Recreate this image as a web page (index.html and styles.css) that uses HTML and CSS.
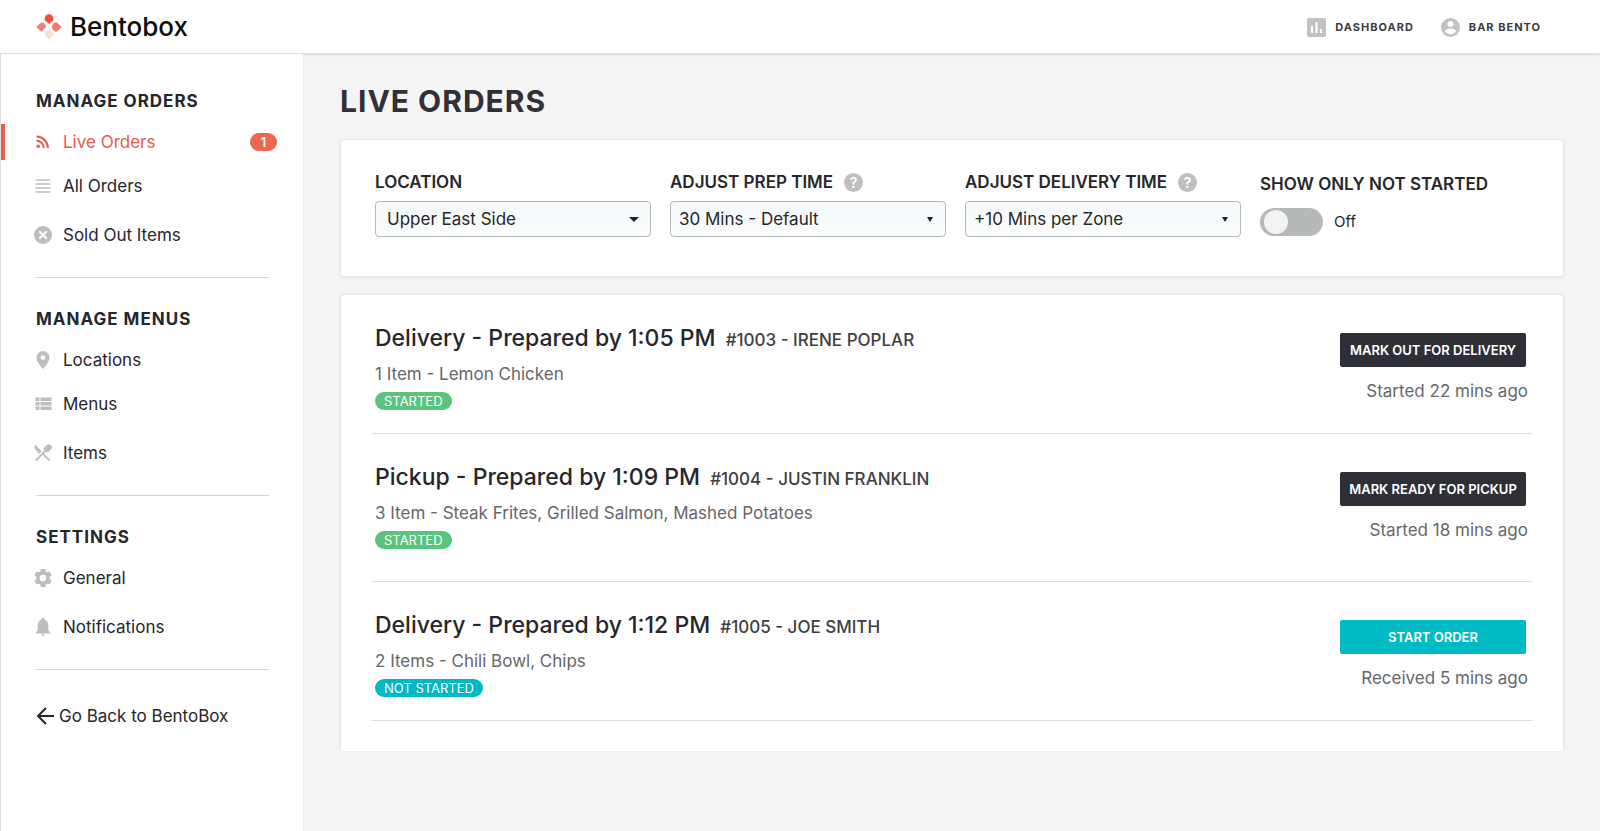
FILE: index.html
```html
<!doctype html>
<html lang="en">
    <head>
        <meta charset="utf-8">
        <title>Live Orders - Bentobox</title>
        <meta name="viewport" content="width=device-width, initial-scale=1">
        <link rel="stylesheet" href="styles.css">
    </head>
    <body>
        <header class="topbar">
            <a class="logo" href="#">
                <svg class="logo-mark" viewBox="0 0 26 26">
                    <path fill="#fb4b37" d="M13 10L8.900 6.200C8 3 10.200.3 13 .3s5 2.700 4.100 5.900z"/>
                    <path fill="#f08079" d="M10 13l-4.500 4.800L.3 13l5.200-4.800C8.300 8.700 10 10.600 10 13z"/>
                    <path fill="#f5796c" d="M16 13c0-2.400 1.600-4.300 4.500-4.800l5.200 4.800-5.200 4.800C17.700 17.300 16 15.400 16 13z"/>
                    <path fill="#fddcd6" d="M8.400 20.500c.5-2.600 2.200-4.200 4.600-4.200s4.100 1.600 4.600 4.200L13 25.500z"/>
                </svg>
                <span>Bentobox</span>
            </a>
            <nav class="topnav">
                <a href="#">
                    <svg class="top-icon" viewBox="0 0 19 19">
                        <rect width="19" height="19" rx="2" fill="#c2c2c2"/>
                        <path fill="#fff" d="M4 8h2v7H4zM8.500 4h2v11h-2zM13 11h2v4h-2z"/>
                    </svg>
                    <span>DASHBOARD</span>
                </a>
                <a href="#">
                    <svg class="top-icon" viewBox="0 0 19 19">
                        <circle cx="9.500" cy="9.500" r="9.500" fill="#c2c2c2"/>
                        <circle cx="9.500" cy="6" r="3" fill="#fff"/>
                        <path fill="#fff" d="M3.800 13.200c1-2 3.400-2.700 5.700-2.700s4.700.7 5.700 2.700c-1.200 1.800-3.300 3-5.700 3s-4.500-1.200-5.700-3z"/>
                    </svg>
                    <span>BAR BENTO</span>
                </a>
            </nav>
        </header>

        <div class="layout">
            <aside class="sidebar">
                <section class="nav-group">
                    <h2>MANAGE ORDERS</h2>
                    <ul>
                        <li>
                            <a class="active" href="#">
                                <svg class="nav-icon" viewBox="0 0 18 18">
                                    <circle cx="4.200" cy="13.300" r="1.800" fill="currentColor"/>
                                    <path fill="none" stroke="currentColor" stroke-width="2" d="M2.500 7.800a7.200 7.200 0 0 1 7.200 7.200M2.500 3.600a11.400 11.400 0 0 1 11.400 11.400"/>
                                </svg>
                                <span>Live Orders</span>
                                <span class="count">1</span>
                            </a>
                        </li>
                        <li>
                            <a href="#">
                                <svg class="nav-icon" viewBox="0 0 18 18">
                                    <path stroke="currentColor" stroke-width="1.500" d="M1.500 3h15M1.500 7h15M1.500 11h15M1.500 15h15"/>
                                </svg>
                                <span>All Orders</span>
                            </a>
                        </li>
                        <li>
                            <a href="#">
                                <svg class="nav-icon" viewBox="0 0 18 18">
                                    <circle cx="9" cy="9" r="9" fill="currentColor"/>
                                    <path stroke="#fff" stroke-width="2" d="M5.200 5.200l7.600 7.600M12.800 5.200l-7.600 7.600"/>
                                </svg>
                                <span>Sold Out Items</span>
                            </a>
                        </li>
                    </ul>
                </section>
                <section class="nav-group">
                    <h2>MANAGE MENUS</h2>
                    <ul>
                        <li>
                            <a href="#">
                                <svg class="nav-icon" viewBox="0 0 18 18">
                                    <path fill="currentColor" fill-rule="evenodd" d="M9 0a6.500 6.500 0 0 0-6.500 6.500C2.500 11.200 9 18 9 18s6.500-6.800 6.500-11.500A6.500 6.500 0 0 0 9 0zm0 4.200a2.400 2.400 0 1 1 0 4.800 2.400 2.400 0 0 1 0-4.800z"/>
                                </svg>
                                <span>Locations</span>
                            </a>
                        </li>
                        <li>
                            <a href="#">
                                <svg class="nav-icon" viewBox="0 0 18 18">
                                    <path fill="currentColor" d="M1.500 2.500h4V6h-4zM6.500 2.500h11V6h-11zM1.500 7h4v3.500h-4zM6.500 7h11v3.500h-11zM1.500 11.500h4V15h-4zM6.500 11.500h11V15h-11z"/>
                                </svg>
                                <span>Menus</span>
                            </a>
                        </li>
                        <li>
                            <a href="#">
                                <svg class="nav-icon" viewBox="0 0 18 18">
                                    <path fill="currentColor" d="M1.200.8l6.600 6.500-2.500 2.500-3.500-3.500C.3 4.800.1 2.500 1.200.8z"/>
                                    <ellipse cx="13.800" cy="4.200" rx="3.200" ry="4.400" transform="rotate(45 13.800 4.200)" fill="currentColor"/>
                                    <path stroke="currentColor" stroke-width="1.800" d="M12 6L1.600 16.600M8.500 9.500l7.200 7.200"/>
                                </svg>
                                <span>Items</span>
                            </a>
                        </li>
                    </ul>
                </section>
                <section class="nav-group">
                    <h2>SETTINGS</h2>
                    <ul class="spaced">
                        <li>
                            <a href="#">
                                <svg class="nav-icon" viewBox="0 0 18 18">
                                    <path fill="currentColor" fill-rule="evenodd" d="M6.800 0h4.400l.4 2.400 1.500.9 2.300-.9 2.200 3.800-1.900 1.500v2.600l1.900 1.500-2.200 3.800-2.300-.9-1.500.9-.4 2.400H6.800l-.4-2.400-1.500-.9-2.300.9L.4 11.800l1.900-1.500V7.700L.4 6.200l2.200-3.800 2.300.9 1.500-.9zM9 5.800a3.200 3.200 0 1 0 0 6.400 3.200 3.200 0 0 0 0-6.400z"/>
                                </svg>
                                <span>General</span>
                            </a>
                        </li>
                        <li>
                            <a href="#">
                                <svg class="nav-icon" viewBox="0 0 18 18">
                                    <path fill="currentColor" d="M9 0c.9 0 1.400.6 1.400 1.600 2.500.6 3.900 2.700 3.900 5.400v5.500l2 2v1H1.700v-1l2-2V7c0-2.700 1.400-4.800 3.900-5.400C7.600.6 8.100 0 9 0zM7.200 16.300h3.600c0 1-.8 1.700-1.800 1.700s-1.800-.7-1.800-1.700z"/>
                                </svg>
                                <span>Notifications</span>
                            </a>
                        </li>
                    </ul>
                </section>
                <a class="go-back" href="#">
                    <svg class="nav-icon" viewBox="0 0 18 18">
                        <path fill="none" stroke="currentColor" stroke-width="2" d="M18 9H2.500M10 1L2 9l8 8"/>
                    </svg>
                    <span>Go Back to BentoBox</span>
                </a>
            </aside>

            <main>
                <h1>LIVE ORDERS</h1>

                <form class="card filters">
                    <div class="filter">
                        <div class="filter-label">
                            <label for="location">LOCATION</label>
                        </div>
                        <div class="select-box wide">
                            <select id="location">
                                <option>Upper East Side</option>
                            </select>
                        </div>
                    </div>
                    <div class="filter">
                        <div class="filter-label">
                            <label for="prep">ADJUST PREP TIME</label>
                            <span class="help">?</span>
                        </div>
                        <div class="select-box">
                            <select id="prep">
                                <option>30 Mins - Default</option>
                            </select>
                        </div>
                    </div>
                    <div class="filter">
                        <div class="filter-label">
                            <label for="delivery">ADJUST DELIVERY TIME</label>
                            <span class="help">?</span>
                        </div>
                        <div class="select-box">
                            <select id="delivery">
                                <option>+10 Mins per Zone</option>
                            </select>
                        </div>
                    </div>
                    <div class="filter-toggle">
                        <label for="not-started">SHOW ONLY NOT STARTED</label>
                        <div class="toggle-row">
                            <input class="toggle" id="not-started" type="checkbox">
                            <span>Off</span>
                        </div>
                    </div>
                </form>

                <section class="card orders">
                    <article class="order">
                        <div class="order-info">
                            <h3>Delivery - Prepared by 1:05 PM <small>#1003 - IRENE POPLAR</small></h3>
                            <p>1 Item - Lemon Chicken</p>
                            <span class="status">STARTED</span>
                        </div>
                        <div class="order-actions">
                            <button type="button">MARK OUT FOR DELIVERY</button>
                            <p>Started 22 mins ago</p>
                        </div>
                    </article>
                    <article class="order pickup">
                        <div class="order-info">
                            <h3>Pickup - Prepared by 1:09 PM <small>#1004 - JUSTIN FRANKLIN</small></h3>
                            <p>3 Item - Steak Frites, Grilled Salmon, Mashed Potatoes</p>
                            <span class="status">STARTED</span>
                        </div>
                        <div class="order-actions">
                            <button type="button">MARK READY FOR PICKUP</button>
                            <p>Started 18 mins ago</p>
                        </div>
                    </article>
                    <article class="order">
                        <div class="order-info">
                            <h3>Delivery - Prepared by 1:12 PM <small>#1005 - JOE SMITH</small></h3>
                            <p>2 Items - Chili Bowl, Chips</p>
                            <span class="status new">NOT STARTED</span>
                        </div>
                        <div class="order-actions">
                            <button class="start" type="button">START ORDER</button>
                            <p>Received 5 mins ago</p>
                        </div>
                    </article>
                </section>
            </main>
        </div>
    </body>
</html>
```
FILE: styles.css
```css
* {
    box-sizing: border-box;
    padding: 0;
    margin: 0;
}

body {
    display: flex;
    flex-direction: column;
    min-height: 100vh;
    background: #f4f4f4;
    color: #26262b;
    font-family: Inter, "Liberation Sans", sans-serif;
    font-size: 17px;
    line-height: 24px;
}

a {
    color: inherit;
    text-decoration: none;
}

ul {
    list-style: none;
}

svg {
    flex: none;
}

/* top bar */
.topbar {
    display: flex;
    align-items: center;
    justify-content: space-between;
    height: 54px;
    padding: 1px 59px 0 36px;
    background: #fff;
    border-bottom: 1px solid #e0e0e0;
    box-shadow: 0 1px 2px rgba(0,0,0,0.12);
}

.logo {
    display: flex;
    align-items: center;
    gap: 8px;
    color: #0b0b0b;
    font-size: 26px;
    font-weight: 500;
}

.logo-mark {
    width: 26px;
    height: 26px;
}

.topnav {
    display: flex;
    gap: 27px;
}

.topnav a {
    display: flex;
    align-items: center;
    gap: 9px;
    color: #3c3c40;
    font-size: 11px;
    font-weight: 700;
    letter-spacing: 1px;
}

.top-icon {
    width: 19px;
    height: 19px;
}

.layout {
    display: flex;
    flex: 1;
}

/* sidebar */
.sidebar {
    flex: none;
    width: 304px;
    padding: 37px 26px 0 0;
    background: #fff;
    border-left: 1px solid #dcdcdc;
    border-right: 1px solid #ececec;
}

.nav-group h2 {
    margin: 0 0 13px 35px;
    font-size: 17px;
    font-weight: 700;
    line-height: 20px;
    letter-spacing: 1px;
}

.nav-group li {
    margin-bottom: 13px;
}

.nav-group li:first-child {
    margin-bottom: 8px;
}

.nav-group .spaced li:first-child {
    margin-bottom: 13px;
}

.nav-group li:last-child {
    margin-bottom: 0;
}

.nav-group a {
    display: flex;
    align-items: center;
    gap: 11px;
    height: 36px;
    padding-left: 33px;
}

.nav-group::after {
    content: "";
    display: block;
    height: 1px;
    margin: 24px 8px 31px 35px;
    background: #d6d6d6;
}

.nav-icon {
    width: 18px;
    height: 18px;
    color: #bdbdbd;
}

.nav-group .active {
    padding-left: 29px;
    border-left: 4px solid #ee5b4a;
    color: #e8594a;
}

.active .nav-icon,
.go-back .nav-icon {
    color: inherit;
}

.count {
    width: 27px;
    margin-left: auto;
    border-radius: 9px;
    background: #ee6652;
    color: #fff;
    font-size: 13px;
    font-weight: 600;
    line-height: 18px;
    text-align: center;
}

.go-back {
    display: flex;
    align-items: center;
    gap: 5px;
    margin: 0 0 0 35px;
    padding-top: 3px;
}

/* main column */
main {
    flex: 1;
    min-width: 0;
    padding: 27px 36px 81px;
}

h1 {
    margin-bottom: 18px;
    color: #303036;
    font-size: 30px;
    font-weight: 700;
    line-height: 40px;
    letter-spacing: 1px;
}

.card {
    background: #fff;
    border: 1px solid #e6e6e6;
    border-radius: 4px;
    box-shadow: 0 1px 3px rgba(0,0,0,0.08);
}

.filters {
    display: flex;
    gap: 19px;
    padding: 30px 35px 39px 34px;
    margin-bottom: 17px;
}

.filter {
    flex: 0 1 276px;
}

.filter-label {
    display: flex;
    align-items: center;
    gap: 11px;
    margin-bottom: 7px;
}

.filters label {
    font-weight: 600;
    white-space: nowrap;
}

.help {
    width: 19px;
    border-radius: 50%;
    background: #bfbfbf;
    color: #fff;
    font-size: 14px;
    font-weight: 600;
    line-height: 19px;
    text-align: center;
}

.select-box {
    position: relative;
}

.select-box::after {
    content: "";
    position: absolute;
    top: 16px;
    right: 13px;
    border: 3px solid transparent;
    border-top: 5px solid #222;
    border-bottom: 0;
    pointer-events: none;
}

.select-box.wide::after {
    right: 12px;
    border-left-width: 5px;
    border-right-width: 5px;
}

select {
    appearance: none;
    display: block;
    width: 100%;
    height: 36px;
    padding: 0 28px 0 8px;
    border: 1px solid #b3b8ba;
    border-radius: 4px;
    background: linear-gradient(#f4f9fb, #fbfcfc);
    color: #26262b;
    font: inherit;
}

.wide select {
    padding-left: 11px;
}

.filter-toggle {
    padding-top: 2px;
}

.toggle-row {
    display: flex;
    align-items: center;
    gap: 11px;
    margin-top: 12px;
    font-size: 15px;
}

.toggle {
    appearance: none;
    width: 63px;
    height: 28px;
    padding: 2px 4px;
    border-radius: 14px;
    background: #b5b9ba;
}

.toggle::before {
    content: "";
    display: block;
    width: 24px;
    height: 24px;
    border-radius: 50%;
    background: #f3f3f3;
}

.toggle:checked {
    padding-left: 35px;
    background: #00bac6;
}

/* orders */
.orders {
    padding: 0 31px 30px;
    border-bottom: 0;
    border-radius: 4px 4px 0 0;
    box-shadow: 0 0 2px rgba(0,0,0,0.08);
}

.order {
    display: flex;
    justify-content: space-between;
    padding: 27px 4px 23px 3px;
    border-bottom: 1px solid #dcdcdc;
}

.order.pickup {
    padding-bottom: 32px;
}

.order h3 {
    font-size: 23px;
    font-weight: 500;
    line-height: 32px;
}

.order small {
    margin-left: 4px;
    color: #3e3e42;
    font-size: 17px;
}

.order p {
    margin: 6px 0;
    color: #66666a;
}

.status {
    display: block;
    width: max-content;
    padding: 0 9px;
    border-radius: 9px;
    background: #5bc47c;
    color: #fff;
    font-size: 13px;
    line-height: 18px;
}

.status.new {
    background: #00b8c6;
}

.order-actions {
    flex: none;
    min-width: 188px;
    padding-top: 11px;
}

.order-actions p {
    margin-top: 12px;
    text-align: right;
}

button {
    display: block;
    min-width: 186px;
    height: 34px;
    padding: 0 9px;
    border: 0;
    border-radius: 2px;
    background: #2f2f38;
    color: #fff;
    font: 600 13px Inter, "Liberation Sans", sans-serif;
    cursor: pointer;
}

button.start {
    background: #00bac6;
}
```
